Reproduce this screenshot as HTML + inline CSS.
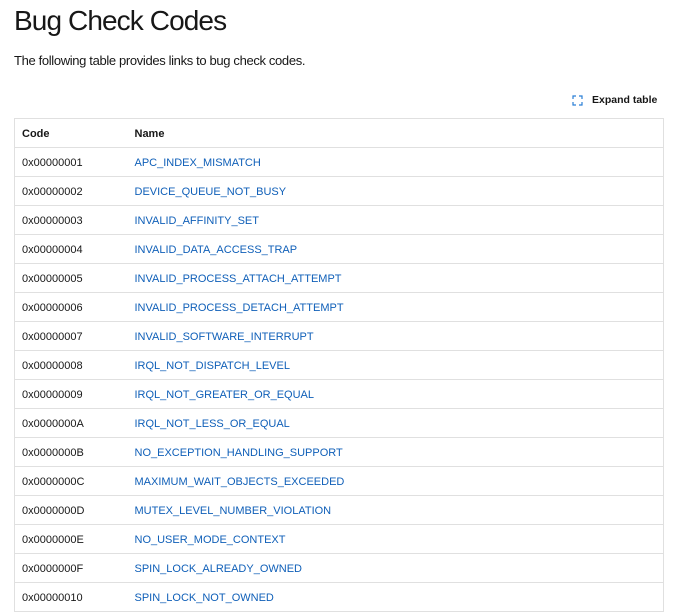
<!DOCTYPE html>
<html><head><meta charset="utf-8"><style>
body{margin:0;background:#fff;font-family:"Liberation Sans",sans-serif;color:#171717;width:680px;height:608px;overflow:hidden;position:relative}
h1{position:absolute;left:14px;top:5px;margin:0;font-size:28px;font-weight:400;letter-spacing:-0.9px}
p{position:absolute;left:14px;top:53px;margin:0;font-size:13px;letter-spacing:-0.35px}
.exp{position:absolute;left:572px;top:94px;font-size:10.5px;font-weight:700;color:#171717}
.exp svg{position:absolute;left:0;top:1px}
.exp span{position:absolute;left:20px;top:0;white-space:nowrap}
table{position:absolute;left:14px;top:118px;width:650px;border-collapse:collapse;font-size:11px}
td,th{border-top:1px solid #e0e0e0;height:28px;padding:2px 0 0 0;box-sizing:border-box;text-align:left}
tr{height:29px}
table{border:1px solid #e0e0e0}
th{font-weight:700}
td:first-child,th:first-child{padding-left:7px;width:120px}
a{color:#0f5fb8;text-decoration:none}
</style></head><body>
<h1>Bug Check Codes</h1>
<p>The following table provides links to bug check codes.</p>
<div class="exp"><svg width="11" height="11" viewBox="0 0 11 11" fill="none" stroke="#2b7fd6" stroke-width="1.2"><path d="M1 4V1h3M7 1h3v3M10 7v3H7M4 10H1V7"/></svg><span>Expand table</span></div>
<table>
<tr><th>Code</th><th>Name</th></tr>
<tr><td>0x00000001</td><td><a>APC_INDEX_MISMATCH</a></td></tr>
<tr><td>0x00000002</td><td><a>DEVICE_QUEUE_NOT_BUSY</a></td></tr>
<tr><td>0x00000003</td><td><a>INVALID_AFFINITY_SET</a></td></tr>
<tr><td>0x00000004</td><td><a>INVALID_DATA_ACCESS_TRAP</a></td></tr>
<tr><td>0x00000005</td><td><a>INVALID_PROCESS_ATTACH_ATTEMPT</a></td></tr>
<tr><td>0x00000006</td><td><a>INVALID_PROCESS_DETACH_ATTEMPT</a></td></tr>
<tr><td>0x00000007</td><td><a>INVALID_SOFTWARE_INTERRUPT</a></td></tr>
<tr><td>0x00000008</td><td><a>IRQL_NOT_DISPATCH_LEVEL</a></td></tr>
<tr><td>0x00000009</td><td><a>IRQL_NOT_GREATER_OR_EQUAL</a></td></tr>
<tr><td>0x0000000A</td><td><a>IRQL_NOT_LESS_OR_EQUAL</a></td></tr>
<tr><td>0x0000000B</td><td><a>NO_EXCEPTION_HANDLING_SUPPORT</a></td></tr>
<tr><td>0x0000000C</td><td><a>MAXIMUM_WAIT_OBJECTS_EXCEEDED</a></td></tr>
<tr><td>0x0000000D</td><td><a>MUTEX_LEVEL_NUMBER_VIOLATION</a></td></tr>
<tr><td>0x0000000E</td><td><a>NO_USER_MODE_CONTEXT</a></td></tr>
<tr><td>0x0000000F</td><td><a>SPIN_LOCK_ALREADY_OWNED</a></td></tr>
<tr><td>0x00000010</td><td><a>SPIN_LOCK_NOT_OWNED</a></td></tr>
</table>
</body></html>
